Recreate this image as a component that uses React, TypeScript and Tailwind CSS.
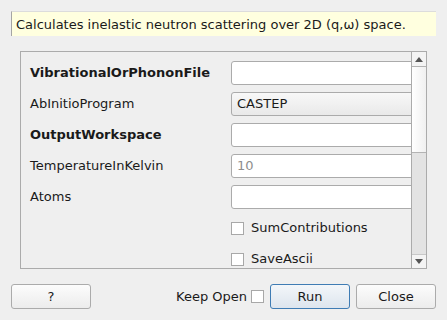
export default function App() {
  const font = { fontFamily: '"DejaVu Sans", sans-serif' };

  return (
    <div
      className="w-[447px] h-[320px] bg-[#efefef] text-[13px] text-[#1a1a1a] flex flex-col overflow-hidden"
      style={font}
    >
      <div className="mt-[11px] mx-[11px] h-[25px] bg-[#ffffdf] border-l border-t border-l-[#a5a5a5] border-t-[#dcdcdc] flex items-center pl-[4px] leading-none">
        Calculates inelastic neutron scattering over 2D (q,ω) space.
      </div>

      <div className="ml-[20px] mt-[15px] w-[407px] h-[218px] border border-[#ababab] flex">
        <div className="flex-1 overflow-hidden pt-[9px] pl-[9px]">
          <div className="flex flex-col gap-[7px]">
            <Row label="VibrationalOrPhononFile" bold>
              <Input />
            </Row>
            <Row label="AbInitioProgram">
              <div className="h-[24px] w-[220px] shrink-0 border border-[#ababab] rounded-[3px] bg-gradient-to-b from-[#f8f8f8] to-[#e9e9e9] flex items-center pl-[5px]">
                CASTEP
              </div>
            </Row>
            <Row label="OutputWorkspace" bold>
              <Input />
            </Row>
            <Row label="TemperatureInKelvin">
              <Input value="10" muted />
            </Row>
            <Row label="Atoms">
              <Input />
            </Row>
            <Row label="">
              <Check label="SumContributions" />
            </Row>
            <Row label="">
              <Check label="SaveAscii" />
            </Row>
          </div>
        </div>

        <div className="w-[15px] border-l border-[#ababab] flex flex-col bg-[#e3e3e3]">
          <div className="h-[14px] bg-[#f4f4f4] flex items-center justify-center">
            <svg width="8" height="5" viewBox="0 0 8 5">
              <path d="M0 5 L4 0 L8 5 Z" fill="#555" />
            </svg>
          </div>
          <div className="h-[87px] border-y border-[#b3b3b3] bg-gradient-to-r from-[#ffffff] to-[#f0f0f0]" />
          <div className="flex-1" />
          <div className="h-[14px] bg-[#f4f4f4] border-t border-[#c8c8c8] flex items-center justify-center">
            <svg width="8" height="5" viewBox="0 0 8 5">
              <path d="M0 0 L8 0 L4 5 Z" fill="#555" />
            </svg>
          </div>
        </div>
      </div>

      <div className="mt-[15px] mx-[11px] flex items-center">
        <Button label="?" />
        <div className="flex-1" />
        <span>Keep Open</span>
        <div className="ml-[4px] w-[13px] h-[13px] border border-[#a8a8a8] bg-white" />
        <button className="ml-[6px] w-[80px] h-[25px] rounded-[3px] border border-[#3f7cb4] bg-gradient-to-b from-[#f3f6f9] to-[#dde5ee] flex items-center justify-center">
          Run
        </button>
        <div className="ml-[6px]">
          <Button label="Close" />
        </div>
      </div>
    </div>
  );
}

function Row({
  label,
  bold,
  children,
}: {
  label: string;
  bold?: boolean;
  children: React.ReactNode;
}) {
  return (
    <div className="flex items-center h-[24px]">
      <div className={`w-[201px] shrink-0 ${bold ? "font-bold" : ""}`}>{label}</div>
      {children}
    </div>
  );
}

function Input({ value, muted }: { value?: string; muted?: boolean }) {
  return (
    <div
      className={`h-[24px] w-[220px] shrink-0 border border-[#ababab] rounded-[3px] bg-white flex items-center pl-[5px] ${
        muted ? "text-[#8e8e8e]" : ""
      }`}
    >
      {value}
    </div>
  );
}

function Check({ label }: { label: string }) {
  return (
    <div className="flex items-center gap-[7px]">
      <div className="w-[13px] h-[13px] border border-[#a8a8a8] bg-white" />
      <span>{label}</span>
    </div>
  );
}

function Button({ label }: { label: string }) {
  return (
    <button className="w-[80px] h-[25px] rounded-[3px] border border-[#ababab] bg-gradient-to-b from-[#fcfcfc] to-[#ececec] flex items-center justify-center">
      {label}
    </button>
  );
}
